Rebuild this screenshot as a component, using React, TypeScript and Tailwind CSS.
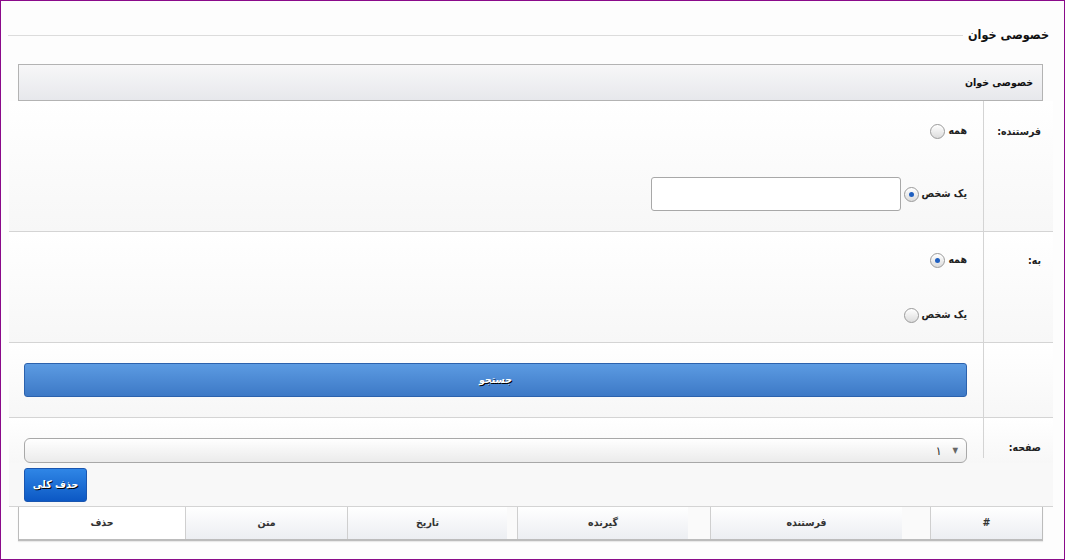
import type { ReactNode } from 'react';

const font = { fontFamily: '"DejaVu Sans Condensed", "DejaVu Sans", sans-serif' };

function Radio({ checked, label }: { checked?: boolean; label: string }) {
  return (
    <label className="flex items-center gap-[3px] text-[10.5px] font-bold text-[#222]">
      <span>{label}</span>
      <span className="flex h-[15px] w-[15px] items-center justify-center rounded-full border border-[#9a9a9a] bg-gradient-to-b from-white to-[#dcdcdc] shadow-[inset_0_1px_1px_rgba(255,255,255,0.8)]">
        {checked && <span className="h-[5px] w-[5px] rounded-full bg-[#1f5fc0]" />}
      </span>
    </label>
  );
}

function Row({ label, top, children, className = '' }: { label: string; top: string; children: ReactNode; className?: string }) {
  return (
    <div className={`flex border-b border-[#d4d4d4] bg-gradient-to-b from-white to-[#f7f7f7] ${className}`}>
      <div className={`w-[70px] shrink-0 border-l border-[#d4d4d4] pr-[12px] text-[10.5px] font-bold leading-[16px] text-[#222] ${top}`}>{label}</div>
      <div className="flex-1">{children}</div>
    </div>
  );
}

const headers = [
  { name: '#', w: 'w-[112px]', pad: 'pr-0' },
  { name: 'فرستنده', w: 'w-[220px]', pad: 'pr-[28px]' },
  { name: 'گیرنده', w: 'w-[193px]', pad: 'pr-[22px]' },
  { name: 'تاریخ', w: 'w-[170px]', pad: 'pr-[10px]' },
  { name: 'متن', w: 'w-[162px]', pad: 'pr-0' },
];

export default function App() {
  return (
    <div dir="rtl" style={font} className="h-[560px] w-[1065px] overflow-hidden border border-[#8a0a8a] bg-[#fdfdfd]">
      <div className="flex items-center pl-[7px] pr-[15px] pt-[24px]">
        <h2 className="text-[12.5px] font-bold leading-[20px] text-[#111]">خصوصی خوان</h2>
        <div className="mr-[5px] h-px flex-1 bg-[#dcdcdc]" />
      </div>

      <div className="ml-[17px] mr-[21px] mt-[19px] flex h-[37px] items-center border border-[#b3b3b3] bg-gradient-to-b from-[#f7f7f8] to-[#e7e8ec] pr-[9px] text-[10.5px] font-bold text-[#111]">
        خصوصی خوان
      </div>

      <div className="ml-[8px] mr-[11px]">
        <Row label="فرستنده:" top="pt-[22px]" className="h-[131px]">
          <div className="flex flex-col items-start pr-[16px] pt-[20px]">
            <div className="flex h-[20px] items-center"><Radio label="همه" /></div>
            <div className="mt-[36px] flex items-center gap-[3px]">
              <Radio checked label="یک شخص" />
              <input className="h-[34px] w-[250px] rounded-[3px] border border-[#a8a8a8] bg-white outline-none" />
            </div>
          </div>
        </Row>
        <Row label="به:" top="pt-[20px]" className="h-[111px]">
          <div className="flex flex-col items-start pr-[16px] pt-[18px]">
            <div className="flex h-[20px] items-center"><Radio checked label="همه" /></div>
            <div className="mt-[35px] flex h-[20px] items-center"><Radio label="یک شخص" /></div>
          </div>
        </Row>
        <Row label="" top="" className="h-[75px]">
          <div className="pl-[15px] pr-[16px] pt-[20px]">
            <button className="flex h-[34px] w-full items-center justify-center rounded-[3px] border border-[#2c62ad] bg-gradient-to-b from-[#5c9be2] to-[#3d79c6] text-[10.5px] font-bold text-white [text-shadow:1px_1px_0_#000]">
              جستجو
            </button>
          </div>
        </Row>
        <div className="flex bg-gradient-to-b from-white to-[#f7f7f7]">
          <div className="h-[40px] w-[70px] shrink-0 border-l border-[#d4d4d4] pr-[12px] pt-[21px] text-[10.5px] font-bold leading-[16px] text-[#222]">صفحه:</div>
          <div className="flex-1 pl-[15px] pr-[16px] pt-[20px]">
            <div className="flex h-[25px] items-center gap-[11px] rounded-[6px] border border-[#a8a8a8] bg-gradient-to-b from-white to-[#ebebeb] pr-[8px] text-[12px] text-[#222]">
              <span className="text-[8px] text-[#666]">▼</span>
              <span>١</span>
            </div>
          </div>
        </div>
        <div className="flex justify-end border-b border-[#d4d4d4] bg-[#f8f8f8] pb-[4px] pl-[15px] pt-[5px]">
          <button className="h-[34px] w-[63px] rounded-[3px] border border-[#1a56b0] bg-gradient-to-b from-[#2f86e6] to-[#0c58c4] text-[10.5px] font-bold text-white [text-shadow:1px_1px_0_#000]">
            حذف کلی
          </button>
        </div>
      </div>

      <div className="ml-[17px] mr-[21px] flex h-[34px] border-x border-b-2 border-[#bcbcbc] text-[10.5px] font-bold text-[#333] shadow-[0_1px_1px_rgba(0,0,0,0.08)]">
        {headers.map((h) => (
          <div key={h.name} className={`${h.w} flex shrink-0 border-l border-[#cfcfcf] bg-[#fafafa] ${h.pad}`}>
            <div className="flex flex-1 items-center justify-center bg-gradient-to-b from-white to-[#eceef2]">{h.name}</div>
          </div>
        ))}
        <div className="flex flex-1 items-center justify-center bg-white">حذف</div>
      </div>
    </div>
  );
}
